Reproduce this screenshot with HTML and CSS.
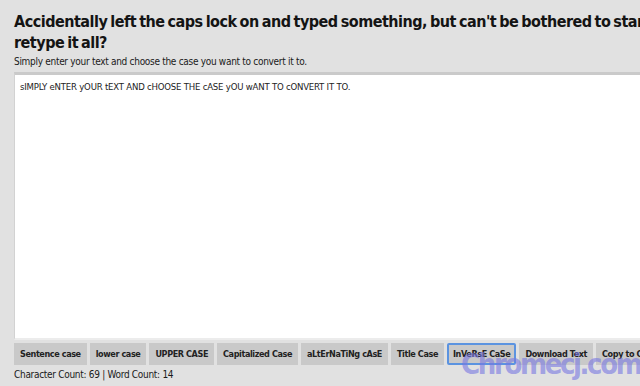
FILE: index.html
```html
<!DOCTYPE html>
<html>
<head>
<meta charset="utf-8">
<link rel="stylesheet" href="styles.css">
</head>
<body>
<div class="page">
  <h1 class="title">Accidentally left the caps lock on and typed something, but can't be bothered to start again and<br>retype it all?</h1>
  <p class="intro">Simply enter your text and choose the case you want to convert it to.</p>
  <div class="editor">sIMPLY eNTER yOUR tEXT AND cHOOSE THE cASE yOU wANT TO cONVERT IT TO.</div>
  <div class="buttons">
    <button class="btn">Sentence case</button>
    <button class="btn">lower case</button>
    <button class="btn">UPPER CASE</button>
    <button class="btn">Capitalized Case</button>
    <button class="btn">aLtErNaTiNg cAsE</button>
    <button class="btn">Title Case</button>
    <button class="btn btn-focus">InVeRsE CaSe</button>
    <button class="btn">Download Text</button>
    <button class="btn">Copy to Clipboard</button>
  </div>
  <p class="count">Character Count: 69 | Word Count: 14</p>
</div>
<div class="watermark">Chromecj.com</div>
</body>
</html>
```
FILE: styles.css
```css
html, body {
  margin: 0;
  padding: 0;
  width: 640px;
  height: 386px;
  overflow: hidden;
  background: #e1e1e1;
}
body {
  font-family: "DejaVu Sans Condensed", "DejaVu Sans", sans-serif;
  color: #1a1a1a;
  position: relative;
}
.page {
  padding: 11px 0 0 14px;
  width: 800px;
}
.title {
  font-size: 16px;
  font-weight: bold;
  line-height: 21px;
  letter-spacing: -0.5px;
  word-spacing: -1.5px;
  margin: 0;
  white-space: nowrap;
  color: #141414;
}
.intro {
  font-size: 10px;
  letter-spacing: -0.3px;
  margin: 2px 0 4px 0;
  line-height: 13px;
}
.editor {
  background: #fff;
  height: 253px;
  border-top: 3px solid #cacaca;
  border-left: 1px solid #d2d2d2;
  border-bottom: 2px solid #ececec;
  padding: 5px 5px;
  font-size: 9.5px;
  letter-spacing: -0.2px;
  line-height: 13px;
  color: #222;
}
.buttons {
  display: flex;
  gap: 3px;
  margin-top: 3px;
  white-space: nowrap;
}
.btn {
  font-family: inherit;
  font-size: 9px;
  font-weight: bold;
  letter-spacing: -0.4px;
  color: #222;
  background: #c9c9c9;
  border: 2px solid #c9c9c9;
  padding: 3px 4px;
  line-height: 12px;
  margin: 0;
}
.btn-focus {
  border-color: #5b93e0;
  border-radius: 2px;
}
.count {
  font-size: 10px;
  letter-spacing: -0.3px;
  margin: 3px 0 0 0;
  line-height: 13px;
}
.watermark {
  position: absolute;
  left: 461px;
  top: 347px;
  font-family: "DejaVu Sans Condensed", "DejaVu Sans", sans-serif;
  font-weight: bold;
  font-size: 29px;
  letter-spacing: -2.4px;
  color: rgba(120, 120, 225, 0.62);
}
```
